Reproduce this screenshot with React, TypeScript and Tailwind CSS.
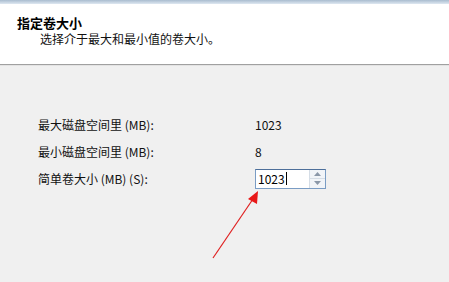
export default function App() {
  const font = "font-['Noto_Sans_CJK_SC','Liberation_Sans',sans-serif]";
  return (
    <div className={`w-[449px] h-[282px] flex flex-col overflow-hidden text-[12px] text-[#111] ${font}`}>
      {/* window frame strip */}
      <div className="h-[4px] bg-gradient-to-b from-[#a9bccf] to-[#dfe8f1]" />

      {/* header */}
      <div className="h-[60px] bg-white pl-[17px] pt-[11px] leading-[16px]">
        <div className="font-bold text-[13px] text-black">指定卷大小</div>
        <div className="pl-[23px] text-[12px]">选择介于最大和最小值的卷大小。</div>
      </div>
      <div className="h-[1px] bg-[#a0a0a0]" />
      <div className="h-[1px] bg-[#e3e3e3]" />

      {/* body */}
      <div className="flex-1 bg-[#f0f0f0] relative">
        <div className="grid grid-cols-[217px_auto] auto-rows-[27px] items-center pl-[38px] pt-[45px]">
          <span>最大磁盘空间里 (MB):</span>
          <span>1023</span>
          <span>最小磁盘空间里 (MB):</span>
          <span>8</span>
          <span>简单卷大小 (MB) (S):</span>
          <div className="flex w-[71px] h-[20px] border border-[#7a9cc4] border-t-[#4d6f9a] bg-white">
            <div className="flex-1 flex items-center pl-[2px] text-black">
              1023<span className="inline-block w-[1px] h-[13px] bg-black ml-[1px]" />
            </div>
            <div className="w-[16px] flex flex-col border-l border-[#d5dde6] bg-[#f1f4f8]">
              <div className="flex-1 flex items-center justify-center border-b border-[#d5dde6]">
                <svg width="7" height="4" viewBox="0 0 7 4"><path d="M0 4 L3.5 0 L7 4 Z" fill="#8a97a8" /></svg>
              </div>
              <div className="flex-1 flex items-center justify-center">
                <svg width="7" height="4" viewBox="0 0 7 4"><path d="M0 0 L3.5 4 L7 0 Z" fill="#8a97a8" /></svg>
              </div>
            </div>
          </div>
        </div>

        {/* red annotation arrow */}
        <svg className="absolute left-0 top-0" width="449" height="216" viewBox="0 66 449 216">
          <line x1="213" y1="258" x2="253" y2="199" stroke="#e02020" strokeWidth="1.2" />
          <path d="M258 191 L248 199 L257 204 Z" fill="#e81818" />
        </svg>
      </div>
    </div>
  );
}
